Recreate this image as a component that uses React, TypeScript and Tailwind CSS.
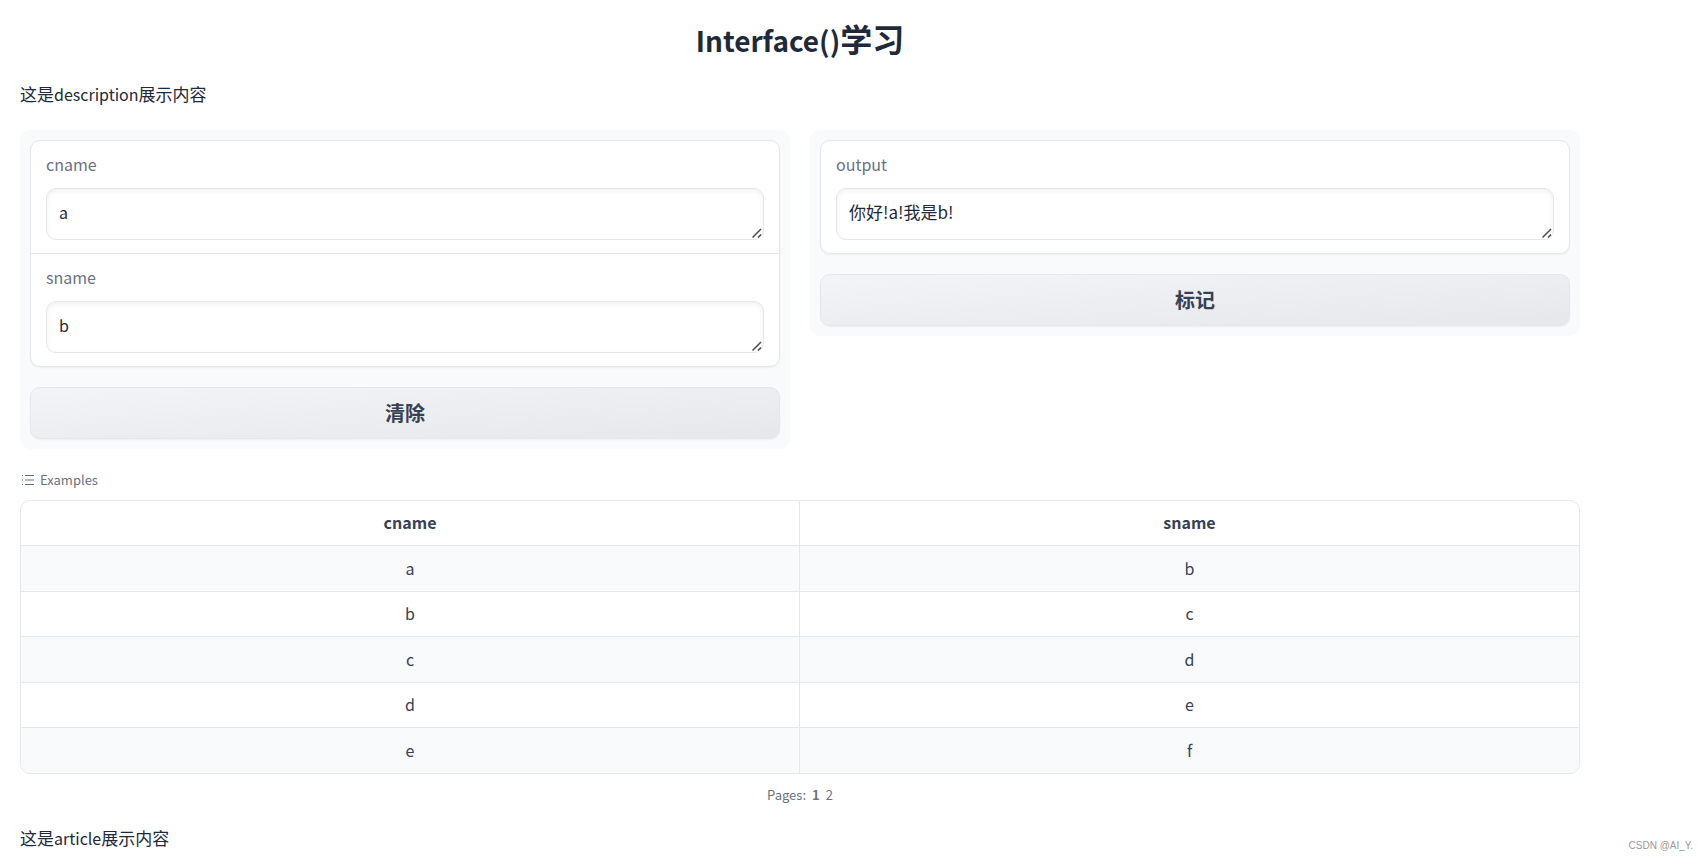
import { useState } from 'react';

const examples = [
	['a', 'b'],
	['b', 'c'],
	['c', 'd'],
	['d', 'e'],
	['e', 'f'],
];

interface FieldProps {
	id: string;
	label: string;
	value: string;
	onChange?: (value: string) => void;
	large?: boolean;
}

function Field({ id, label, value, onChange, large }: FieldProps) {
	return (
		<div className="px-[15px] pt-3 pb-[13px]">
			<label htmlFor={id} className="mb-3 block text-base leading-[23px] text-gray-500">
				{label}
			</label>
			<div className="relative">
				<textarea
					id={id}
					rows={1}
					value={value}
					readOnly={!onChange}
					onChange={(event) => onChange?.(event.target.value)}
					className={`block h-[52px] w-full resize overflow-hidden rounded-[10px] border border-gray-200 bg-white px-3 py-[11px] leading-6 text-gray-800 shadow-[inset_0_2px_5px_0_rgba(0,0,0,0.06)] focus:outline-none [&::-webkit-resizer]:appearance-none [&::-webkit-resizer]:bg-transparent ${
						large ? 'text-[17px]' : 'text-base'
					}`}
				/>
				<svg
					viewBox="0 0 10 10"
					className="pointer-events-none absolute right-[2px] bottom-[2px] h-[10px] w-[10px]"
					fill="none"
					stroke="#4b4b4b"
					strokeWidth="1.5"
					aria-hidden="true"
				>
					<path d="M0.5 9.5 9 1M6 9.5 9 6.5" />
				</svg>
			</div>
		</div>
	);
}

const panelClass = 'flex flex-1 flex-col gap-5 rounded-[10px] bg-[#f9fafb] p-[10px]';
const boxClass =
	'divide-y divide-gray-200 rounded-[10px] border border-gray-200 bg-white shadow-[0_1px_2px_0_rgba(0,0,0,0.05)]';
const buttonClass =
	'h-[52px] w-full rounded-[10px] border border-gray-200 bg-linear-to-br from-gray-100 to-gray-200 text-xl font-bold text-gray-700 shadow-[0_1px_2px_0_rgba(0,0,0,0.05)]';

export default function App() {
	const [cname, setCname] = useState('a');
	const [sname, setSname] = useState('b');
	const [output, setOutput] = useState('你好!a!我是b!');

	const clear = () => {
		setCname('');
		setSname('');
		setOutput('');
	};

	return (
		<div className="relative min-h-screen bg-white font-['Noto_Sans_CJK_SC',sans-serif] text-gray-800">
			<main className="max-w-[1600px] px-5 pt-[18px]">
				<h1 className="text-center text-[32px] leading-10 font-bold">
					<span className="text-[28px] leading-none">Interface()</span>学习
				</h1>
				<p className="mt-[21px] text-[17px] leading-[30px]">
					这是<span className="text-base leading-none">description</span>展示内容
				</p>

				<div className="mt-[21px] flex items-start gap-5">
					<section className={panelClass}>
						<div className={boxClass}>
							<Field id="cname" label="cname" value={cname} onChange={setCname} />
							<Field id="sname" label="sname" value={sname} onChange={setSname} />
						</div>
						<button type="button" className={buttonClass} onClick={clear}>
							清除
						</button>
					</section>
					<section className={panelClass}>
						<div className={boxClass}>
							<Field id="output" label="output" value={output} large />
						</div>
						<button type="button" className={buttonClass}>
							标记
						</button>
					</section>
				</div>

				<section className="mt-5">
					<div className="flex h-[21px] items-center gap-1 text-[13px] text-gray-500">
						<svg viewBox="0 0 32 32" className="h-4 w-4" fill="currentColor" aria-hidden="true">
							<path d="M10 6h18v2H10zm0 18h18v2H10zm0-9h18v2H10zm-6 0h2v2H4zm0-9h2v2H4zm0 18h2v2H4z" />
						</svg>
						Examples
					</div>
					<div className="mt-[10px] overflow-hidden rounded-[10px] border border-gray-200">
						<table className="w-full table-fixed border-separate border-spacing-0 text-center text-base leading-6 text-gray-700">
							<thead>
								<tr className="h-[44px]">
									<th className="border-r border-gray-200 pb-[2px] font-bold">cname</th>
									<th className="pb-[2px] font-bold">sname</th>
								</tr>
							</thead>
							<tbody>
								{examples.map(([c, s]) => (
									<tr
										key={c}
										onClick={() => {
											setCname(c);
											setSname(s);
										}}
										className="cursor-pointer odd:h-[46px] odd:bg-gray-50 even:h-[45px]"
									>
										<td className="border-t border-r border-gray-200 pb-[2px]">{c}</td>
										<td className="border-t border-gray-200 pb-[2px]">{s}</td>
									</tr>
								))}
							</tbody>
						</table>
					</div>
					<div className="mt-[10px] flex h-[22px] items-center justify-center gap-[6px] text-[13px] text-gray-500">
						Pages:
						<button type="button" className="font-bold">
							1
						</button>
						<button type="button">2</button>
					</div>
				</section>

				<p className="mt-[17px] text-[17px] leading-[30px]">
					这是<span className="text-base leading-none">article</span>展示内容
				</p>
			</main>
			<span className="absolute right-[14px] bottom-[7px] font-['Liberation_Sans',sans-serif] text-[10px] leading-[14px] text-[#999999]">
				CSDN @AI_Y.
			</span>
		</div>
	);
}
